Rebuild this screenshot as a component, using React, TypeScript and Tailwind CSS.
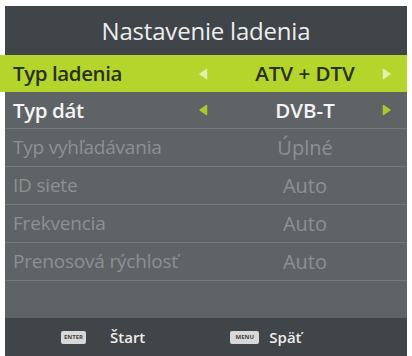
import React from "react";

const font = { fontFamily: '"Open Sans", "Noto Sans", sans-serif' };

function LeftArrow({ color }: { color: string }) {
  return (
    <svg width="10" height="12" viewBox="0 0 10 12">
      <path d="M8.5 1.5 L2 6 L8.5 10.5 Z" fill={color} stroke={color} strokeWidth="1.5" strokeLinejoin="round" />
    </svg>
  );
}
function RightArrow({ color }: { color: string }) {
  return (
    <svg width="10" height="12" viewBox="0 0 10 12">
      <path d="M1.5 1.5 L8 6 L1.5 10.5 Z" fill={color} stroke={color} strokeWidth="1.5" strokeLinejoin="round" />
    </svg>
  );
}

function Row({ label, value }: { label: string; value: string }) {
  return (
    <div className="h-[38px] flex items-center border-b border-[#767c7e] text-[#8b9193]">
      <div className="pl-[8px] w-[193px] text-[19px] tracking-[-0.2px]">{label}</div>
      <div className="w-[10px]" />
      <div className="w-[174px] pl-[20px] text-center text-[20px]">{value}</div>
    </div>
  );
}

export default function App() {
  return (
    <div className="w-[412px] h-[356px] bg-white pt-[6px] overflow-hidden" style={font}>
      <div className="ml-[5px] w-[402px] h-[350px] flex flex-col bg-[#5e6466]">
        <div className="h-[49px] bg-[#3f4549] flex items-center justify-center text-[24px] text-[#eceeee] tracking-[-0.2px]">
          Nastavenie ladenia
        </div>
        <div className="h-[37px] -ml-[5px] bg-[#b4d52c] flex items-center text-[#2a301c] font-semibold">
          <div className="pl-[13px] w-[198px] text-[20.5px] tracking-[-0.4px]">Typ ladenia</div>
          <div className="w-[10px] flex justify-center"><LeftArrow color="#e3efaa" /></div>
          <div className="w-[174px] pl-[20px] text-center text-[20.5px]">ATV + DTV</div>
          <div className="w-[10px] flex justify-center"><RightArrow color="#e3efaa" /></div>
        </div>
        <div className="h-[37px] flex items-center border-b border-[#767c7e] text-[#f4f4f4] font-semibold">
          <div className="pl-[8px] w-[193px] text-[20.5px] tracking-[-0.4px]">Typ dát</div>
          <div className="w-[10px] flex justify-center"><LeftArrow color="#a6cc2c" /></div>
          <div className="w-[174px] pl-[20px] text-center text-[20.5px]">DVB-T</div>
          <div className="w-[10px] flex justify-center"><RightArrow color="#a6cc2c" /></div>
        </div>
        <Row label="Typ vyhľadávania" value="Úplné" />
        <Row label="ID siete" value="Auto" />
        <Row label="Frekvencia" value="Auto" />
        <Row label="Prenosová rýchlosť" value="Auto" />
        <div className="flex-1" />
        <div className="h-[38px] bg-[#3f4548] flex items-center text-[15px] text-[#eeeeee] font-semibold">
          <div className="ml-[56px] w-[25px] h-[13px] bg-[#d8d8d8] rounded-[2px] flex items-center justify-center">
            <span className="text-[6px] leading-none text-[#444] font-bold">ENTER</span>
          </div>
          <span className="ml-[24px]">Štart</span>
          <div className="ml-[85px] w-[29px] h-[13px] bg-[#d8d8d8] rounded-[2px] flex items-center justify-center">
            <span className="text-[6px] leading-none text-[#444] font-bold">MENU</span>
          </div>
          <span className="ml-[10px]">Späť</span>
        </div>
      </div>
    </div>
  );
}
